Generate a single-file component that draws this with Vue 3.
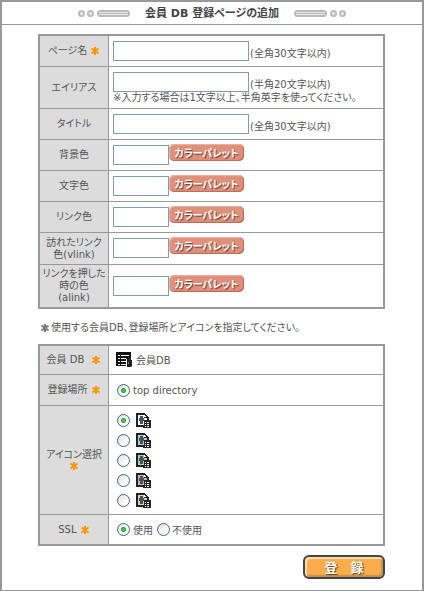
<script setup>
import { ref } from 'vue'

const colorFields = [
  { id: 'bg', lines: ['背景色'] },
  { id: 'text', lines: ['文字色'] },
  { id: 'link', lines: ['リンク色'] },
  { id: 'vlink', lines: ['訪れたリンク', '色(vlink)'] },
  { id: 'alink', lines: ['リンクを押した', '時の色', '(alink)'] }
]
const iconTints = ['#f4f4f4', '#a9d3d6', '#a5d3a5', '#d6adb2', '#d6d3ad']
const place = ref('top')
const icon = ref(0)
const ssl = ref('on')
const star = 'M5 1v8M1.500 2.500l7 5M8.500 2.500l-7 5'
</script>

<template>
  <main class="frame">
    <header class="head">
      <svg class="ornament" width="54" height="9" viewBox="0 0 54 9" aria-hidden="true">
        <g fill="#eee" stroke="#bbb" stroke-width="2">
          <circle cx="4.500" cy="4.500" r="2.500" /><circle cx="13.500" cy="4.500" r="2.500" />
        </g>
        <rect x="20" y="1" width="33" height="7" rx="3.500" fill="#bbb" />
        <path d="M22 3.500h29M22 5.500h29" stroke="#e4e4e4" />
      </svg>
      <h1>会員 DB 登録ページの追加</h1>
      <svg class="ornament" width="54" height="9" viewBox="0 0 54 9" aria-hidden="true">
        <rect x="1" y="1" width="33" height="7" rx="3.500" fill="#bbb" />
        <path d="M3 3.500h29M3 5.500h29" stroke="#e4e4e4" />
        <g fill="#eee" stroke="#bbb" stroke-width="2">
          <circle cx="40.500" cy="4.500" r="2.500" /><circle cx="49.500" cy="4.500" r="2.500" />
        </g>
      </svg>
    </header>

    <form class="body" @submit.prevent>
      <table>
        <tbody>
          <tr>
            <th scope="row"><label for="name">ページ名</label> <svg class="star" viewBox="0 0 10 10"><path :d="star" /></svg></th>
            <td><div class="field"><input id="name" class="box long" type="text"><span class="hint">(全角30文字以内)</span></div></td>
          </tr>
          <tr class="tall">
            <th scope="row"><label for="alias">エイリアス</label></th>
            <td>
              <div class="field"><input id="alias" class="box long" type="text"><span class="hint">(半角20文字以内)</span></div>
              <p class="under">※入力する場合は1文字以上、半角英字を使ってください。</p>
            </td>
          </tr>
          <tr>
            <th scope="row"><label for="title">タイトル</label></th>
            <td><div class="field"><input id="title" class="box long" type="text"><span class="hint">(全角30文字以内)</span></div></td>
          </tr>
          <tr v-for="f in colorFields" :key="f.id" :class="{ double: f.lines.length === 2, tall: f.lines.length === 3 }">
            <th scope="row"><label :for="f.id"><span v-for="l in f.lines" :key="l" class="line">{{ l }}</span></label></th>
            <td>
              <div class="field">
                <input :id="f.id" class="box short" type="text">
                <button type="button" class="palette">カラーパレット</button>
              </div>
            </td>
          </tr>
        </tbody>
      </table>

      <p class="notice"><svg class="star grey" viewBox="0 0 10 10"><path :d="star" /></svg>使用する会員DB、登録場所とアイコンを指定してください。</p>

      <table>
        <tbody>
          <tr class="first">
            <th scope="row">会員 DB <svg class="star wide" viewBox="0 0 10 10"><path :d="star" /></svg></th>
            <td>
              <div class="choice db">
                <svg width="17" height="16" viewBox="0 0 17 16" shape-rendering="crispEdges" aria-hidden="true">
                  <path fill="#111" d="M0 0h15v5h-2v9H0z" />
                  <path fill="#fff" d="M2 3h2v1H2zM5 3h8v1H5zM2 6h2v1H2zM5 6h5v1H5zM2 9h2v1H2zM5 9h5v1H5zM2 12h2v1H2zM5 12h5v1H5z" />
                  <path fill="#fff" d="M10 7h1v9h-1z" />
                  <path fill="#222" d="M12 5h3v3h1v7h-5V9h1z" />
                  <path fill="#777" d="M12 10h1v2h-1zM15 14h1v1h-1z" />
                </svg>
                <span>会員DB</span>
              </div>
            </td>
          </tr>
          <tr>
            <th scope="row">登録場所 <svg class="star" viewBox="0 0 10 10"><path :d="star" /></svg></th>
            <td><label class="choice"><input v-model="place" type="radio" name="place" value="top"><span>top directory</span></label></td>
          </tr>
          <tr class="icons">
            <th scope="row">アイコン選択<svg class="star below" viewBox="0 0 10 10"><path :d="star" /></svg></th>
            <td>
              <label v-for="(tint, i) in iconTints" :key="tint" class="choice icon-choice">
                <input v-model="icon" type="radio" name="icon" :value="i" :aria-label="`アイコン${i + 1}`">
                <svg width="15" height="15" viewBox="0 0 15 15" shape-rendering="crispEdges" aria-hidden="true">
                  <path fill="#222" d="M0 0h9v1h1v1h1v1h1v1h1v3h2v8H7v-1H0z" />
                  <path :fill="tint" d="M2 2h6v3h3v2H8v5H2z" />
                  <path fill="#fff" d="M8 2h1v1h1v1H8z" />
                  <path fill="#45545c" d="M4 3h3v2h1v3H7v3H4V8H3V5h1z" />
                  <path fill="#fff" d="M9 9h1v1H9zM11 9h2v1h-2zM9 11h1v1H9zM11 11h2v1h-2zM9 13h1v1H9zM11 13h2v1h-2z" />
                </svg>
              </label>
            </td>
          </tr>
          <tr class="last">
            <th scope="row">SSL <svg class="star" viewBox="0 0 10 10"><path :d="star" /></svg></th>
            <td>
              <div class="pair">
                <label class="choice"><input v-model="ssl" type="radio" name="ssl" value="on"><span>使用</span></label>
                <label class="choice"><input v-model="ssl" type="radio" name="ssl" value="off"><span>不使用</span></label>
              </div>
            </td>
          </tr>
        </tbody>
      </table>

      <div class="actions"><button type="submit" class="submit">登　録</button></div>
    </form>
  </main>
</template>

<style>
body { background: #fff; }
</style>

<style scoped>
* { box-sizing: border-box; }
.frame {
  border: 2px solid #999;
  color: #555;
  font: 10px/12px "DejaVu Sans", "Noto Sans CJK JP", sans-serif;
  font-feature-settings: "palt";
}
.head {
  display: flex;
  align-items: center;
  justify-content: center;
  gap: 14px;
  height: 23px;
  border-bottom: 1px solid #999;
}
h1 { margin: 0; padding-top: 2px; font-size: 11px; line-height: 16px; font-weight: bold; color: #444; white-space: nowrap; }
.ornament { flex: none; }
.body { padding: 9px 37px 11px 36px; }
table { width: 100%; border: 2px solid #999; border-spacing: 0; table-layout: fixed; }
th, td { padding: 0; height: 31px; border-bottom: 1px solid #999; vertical-align: middle; }
tr:last-child > * { border-bottom: 0; }
th { width: 69px; background: #dcdcdc; border-right: 1px solid #999; font-weight: normal; text-align: center; white-space: nowrap; }
td { padding: 0 4px; }
.double > * { height: 32px; }
.double > td { padding-bottom: 1px; }
.tall > * { height: 42px; }
.first > * { height: 29px; }
.icons > * { height: 109px; }
.last > * { height: 29px; }
.line { display: block; }
.field { display: flex; align-items: flex-end; }
.box { height: 20px; margin: 0; padding: 1px 3px; border: 1px solid #7f9db9; background: #fff; font: inherit; color: inherit; border-radius: 0; }
.long { width: 136px; }
.short { width: 56px; }
.hint { padding-left: 1px; line-height: 14px; white-space: nowrap; }
.under { margin: 0; padding-top: 1px; line-height: 10px; white-space: nowrap; }
.palette {
  align-self: flex-start;
  width: 75px;
  height: 17px;
  margin: -1px 0 0;
  padding: 0;
  border: 0;
  border-radius: 5px;
  background: #df907b;
  box-shadow: inset 1px 1px 1px #edb3a3, inset -1px -1px 1px #b96b58;
  color: #fff;
  font: bold 10px/16px "Noto Sans CJK JP", sans-serif;
  font-feature-settings: "palt";
  text-shadow: 1px 1px 1px #63372d;
  white-space: nowrap;
}
.star { width: 10px; height: 10px; fill: none; stroke: #ff9500; stroke-width: 2px; vertical-align: middle; }
.wide { margin-left: 4px; }
.below { display: block; margin: 0 auto; }
.grey { stroke: #777; margin-right: 1px; }
.notice { margin: 0; padding: 3px 0 0 2px; line-height: 32px; white-space: nowrap; }
.choice { display: flex; align-items: center; gap: 3px; padding-left: 4px; line-height: 16px; }
.choice span { padding-top: 2px; }
.db { padding-left: 3px; }
.icon-choice { height: 20px; gap: 6px; }
.pair { display: flex; }
.pair .choice + .choice { gap: 2px; }
input[type="radio"] {
  appearance: none;
  flex: none;
  width: 13px;
  height: 13px;
  margin: 0;
  border: 1px solid #3a6690;
  border-radius: 50%;
  background: linear-gradient(135deg, #dcdcd8, #fff 70%);
}
input[type="radio"]:checked {
  background: radial-gradient(circle at center, #4bc64b 0 1px, #22a122 2px, transparent 3px), linear-gradient(135deg, #dcdcd8, #fff 70%);
}
.actions { display: flex; justify-content: flex-end; padding-top: 9px; }
.submit {
  width: 82px;
  height: 24px;
  padding: 0;
  border: 2px solid #444;
  border-radius: 6px;
  background: #fbac4b;
  box-shadow: inset 2px 2px 1px #fddcb0, inset -2px -2px 1px #bd935d;
  color: #fff;
  font: bold 13px/18px "Noto Sans CJK JP", sans-serif;
  text-shadow: 1px 1px 1px #5b3a12;
}
</style>
